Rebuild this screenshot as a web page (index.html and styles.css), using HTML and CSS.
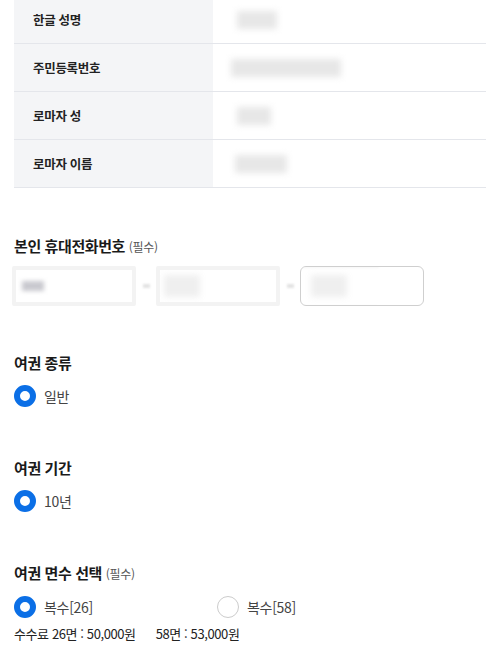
FILE: index.html
```html
<!DOCTYPE html>
<html lang="ko">
<head>
<meta charset="utf-8">
<link rel="stylesheet" href="styles.css">
</head>
<body>
<div class="page">
  <div class="info-table">
    <div class="row">
      <div class="label">한글 성명</div>
      <div class="value"><span class="blob b1"></span></div>
    </div>
    <div class="row">
      <div class="label">주민등록번호</div>
      <div class="value"><span class="blob b2"></span></div>
    </div>
    <div class="row">
      <div class="label">로마자 성</div>
      <div class="value"><span class="blob b3"></span></div>
    </div>
    <div class="row">
      <div class="label">로마자 이름</div>
      <div class="value"><span class="blob b4"></span></div>
    </div>
  </div>

  <section class="section phone">
    <h3 class="title">본인 휴대전화번호 <span class="req">(필수)</span></h3>
    <div class="phone-row">
      <div class="input soft"><span class="pblob first"></span></div>
      <span class="dash"></span>
      <div class="input soft"><span class="pblob"></span></div>
      <span class="dash"></span>
      <div class="input"><span class="pblob"></span><span class="pcover"></span></div>
    </div>
  </section>

  <section class="section after-phone">
    <h3 class="title">여권 종류</h3>
    <div class="radios">
      <label class="radio"><span class="dot on"></span>일반</label>
    </div>
  </section>

  <section class="section">
    <h3 class="title">여권 기간</h3>
    <div class="radios">
      <label class="radio"><span class="dot on"></span>10년</label>
    </div>
  </section>

  <section class="section">
    <h3 class="title">여권 면수 선택 <span class="req">(필수)</span></h3>
    <div class="radios">
      <label class="radio wide"><span class="dot on"></span>복수[26]</label>
      <label class="radio"><span class="dot"></span>복수[58]</label>
    </div>
    <p class="fee">수수료 26면 : 50,000원<span class="gap"></span>58면 : 53,000원</p>
  </section>
</div>
</body>
</html>
```

FILE: styles.css
```css
* { box-sizing: border-box; }
html, body { margin: 0; padding: 0; background: #fff; }
body {
  font-family: "Noto Sans CJK KR", "Noto Sans", sans-serif;
  color: #222;
  width: 486px;
  height: 662px;
  overflow: hidden;
}
.page { padding-left: 14px; }

.info-table { margin-top: -4px; }
.row {
  display: grid;
  grid-template-columns: 199px 1fr;
  height: 48px;
  border-bottom: 1px solid #e4e6eb;
}
.label {
  background: #f4f5f7;
  display: flex;
  align-items: center;
  padding-left: 19px;
  font-size: 12.5px;
  font-weight: 700;
  color: #222;
  letter-spacing: -0.3px;
}
.value {
  position: relative;
  display: flex;
  align-items: center;
  padding-left: 20px;
}
.blob {
  display: block;
  height: 18px;
  background: #e7e7e7;
  filter: blur(3px);
}
.b1 { width: 40px; margin-left: 4px; }
.b2 { width: 110px; margin-left: -2px; }
.b3 { width: 34px; margin-left: 4px; }
.b4 { width: 52px; margin-left: 2px; }

.section { margin-top: 50px; }
.section.phone { margin-top: 47px; }
.section.after-phone { margin-top: 46px; }
.title {
  margin: 0 0 11px;
  font-size: 15px;
  line-height: 22px;
  font-weight: 700;
  color: #1a1a1a;
  letter-spacing: -0.4px;
}
.req {
  font-size: 12px;
  font-weight: 400;
  color: #555;
  letter-spacing: -0.3px;
}

.phone .title { margin-bottom: 8px; }
.phone-row {
  display: flex;
  align-items: center;
  margin-left: -2px;
}
.input {
  position: relative;
  width: 124px;
  height: 40px;
  border: 1px solid #cfcfcf;
  border-radius: 6px;
  background: #fff;
  display: flex;
  align-items: center;
  padding-left: 10px;
  overflow: hidden;
}
.input.soft {
  border: 4px solid #f3f3f3;
  border-radius: 2px;
  padding-left: 4px;
}
.dash {
  width: 20px;
  height: 4px;
  display: flex;
  justify-content: center;
}
.dash::before {
  content: "";
  width: 7px;
  height: 4px;
  background: #e3e3e3;
  filter: blur(1px);
}
.pblob {
  display: block;
  width: 36px;
  height: 22px;
  background: #efefef;
  filter: blur(3px);
}
.pblob.first {
  width: 22px;
  height: 10px;
  background: #c9c9cf;
  filter: blur(2px);
  margin-left: 2px;
}
.pcover {
  position: absolute;
  left: -2px;
  top: -2px;
  width: 80px;
  height: 44px;
  border: 3px solid #f6f6f6;
  border-left: none;
  border-right: none;
  filter: blur(1px);
}

.radios {
  display: flex;
  align-items: center;
}
.radio {
  display: flex;
  align-items: center;
  gap: 8px;
  font-size: 14px;
  line-height: 22px;
  color: #444;
  letter-spacing: -0.3px;
}
.radio.wide { width: 203px; }
.dot {
  width: 22px;
  height: 22px;
  border-radius: 50%;
  border: 1px solid #cccccc;
  background: #fff;
  flex: none;
}
.dot.on { border: 6.5px solid #0b6fe6; }

.fee {
  margin: 7px 0 0;
  font-size: 13px;
  line-height: 18px;
  color: #222;
  letter-spacing: -0.4px;
}
.gap { display: inline-block; width: 20px; }
```
